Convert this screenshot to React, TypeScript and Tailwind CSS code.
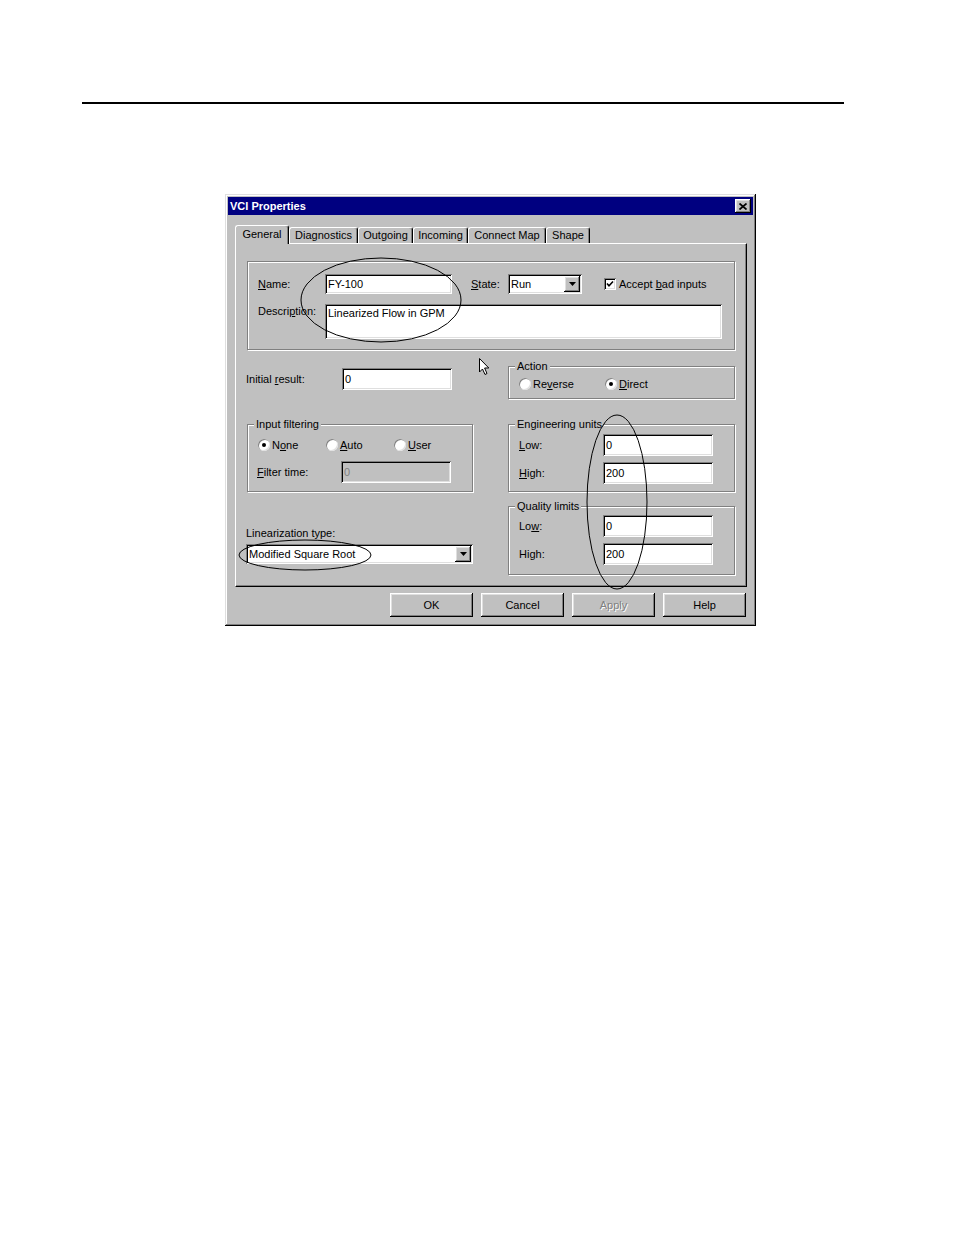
import type { ReactNode } from 'react'

const raised = 'bg-[#c0c0c0] shadow-[inset_-1px_-1px_0_#000,inset_1px_1px_0_#fff,inset_-2px_-2px_0_#808080,inset_2px_2px_0_#dfdfdf]'
const sunken = 'shadow-[inset_1px_1px_0_#808080,inset_-1px_-1px_0_#fff,inset_2px_2px_0_#000,inset_-2px_-2px_0_#dfdfdf]'

function Field({ value, className = '', disabled = false }: { value?: string; className?: string; disabled?: boolean }) {
    return (
        <div className={`flex items-center pl-[3px] ${disabled ? 'bg-[#c0c0c0] text-[#808080]' : 'bg-white text-black'} ${sunken} ${className}`}>
            {value}
        </div>
    )
}

function Arrow() {
    return (
        <div className={`flex items-center justify-center w-[16px] h-[16px] ${raised}`}>
            <svg width="7" height="4" viewBox="0 0 7 4">
                <path d="M0 0 H7 L3.5 4 Z" fill="#000" />
            </svg>
        </div>
    )
}

function Combo({ value, className = '' }: { value: string; className?: string }) {
    return (
        <div className={`flex items-center justify-between bg-white pl-[3px] pr-[2px] ${sunken} ${className}`}>
            <span>{value}</span>
            <Arrow />
        </div>
    )
}

function Radio({ checked = false, children }: { checked?: boolean; children: ReactNode }) {
    return (
        <div className="flex items-center h-[14px]">
            <div className="flex items-center justify-center w-[12px] h-[12px] rounded-full bg-white shadow-[inset_1px_1px_0_#808080,inset_-1px_-1px_0_#dfdfdf]">
                {checked && <div className="w-[4px] h-[4px] rounded-full bg-black" />}
            </div>
            <span className="ml-[2px]">{children}</span>
        </div>
    )
}

function Group({ label, className = '', children }: { label: string; className?: string; children: ReactNode }) {
    return (
        <fieldset className={`border border-[#808080] shadow-[inset_1px_1px_0_#fff,1px_1px_0_#fff] ${className}`}>
            <legend className="ml-[6px] px-[2px] leading-[13px] bg-[#c0c0c0]">{label}</legend>
            {children}
        </fieldset>
    )
}

function Tab({ label, width, selected = false }: { label: string; width: string; selected?: boolean }) {
    return (
        <div
            className={`flex justify-center rounded-t-[3px] border-t border-l border-white border-r border-r-black shadow-[inset_-1px_0_0_#808080] bg-[#c0c0c0] ${width} ${
                selected ? 'h-[19px] -mb-[1px] pt-[2px] relative z-10' : 'h-[16px] pt-[1px]'
            }`}
        >
            {label}
        </div>
    )
}

function Button({ label, disabled = false }: { label: string; disabled?: boolean }) {
    return (
        <div
            className={`flex items-center justify-center w-[83px] h-[24px] ${raised} ${
                disabled ? 'text-[#808080] [text-shadow:1px_1px_0_#fff]' : ''
            }`}
        >
            {label}
        </div>
    )
}

export default function App() {
    return (
        <div className="relative w-[954px] h-[1235px] bg-white overflow-hidden font-['Liberation_Sans',Arial,sans-serif] text-[11px] leading-[13px] text-black">
            {/* Page rule */}
            <div className="ml-[82px] mt-[102px] w-[762px] h-[2px] bg-black" />

            {/* Dialog */}
            <div className="ml-[225px] mt-[90px] w-[531px] h-[432px] p-[3px] bg-[#c0c0c0] shadow-[inset_-1px_-1px_0_#000,inset_1px_1px_0_#dfdfdf,inset_-2px_-2px_0_#808080,inset_2px_2px_0_#fff]">
                {/* Title bar */}
                <div className="flex items-center justify-between h-[18px] bg-[#000080] pl-[2px] pr-[2px]">
                    <span className="text-white font-bold">VCI Properties</span>
                    <div className={`flex items-center justify-center w-[16px] h-[14px] ${raised}`}>
                        <svg width="8" height="7" viewBox="0 0 8 7">
                            <path d="M0.5 0.5 L7.5 6.5 M7.5 0.5 L0.5 6.5" stroke="#000" strokeWidth="1.7" />
                        </svg>
                    </div>
                </div>

                {/* Tabs */}
                <div className="flex items-end h-[18px] mt-[10px] ml-[7px]">
                    <Tab label="General" width="w-[54px]" selected />
                    <Tab label="Diagnostics" width="w-[69px]" />
                    <Tab label="Outgoing" width="w-[55px]" />
                    <Tab label="Incoming" width="w-[55px]" />
                    <Tab label="Connect Map" width="w-[78px]" />
                    <Tab label="Shape" width="w-[44px]" />
                </div>

                {/* Tab panel */}
                <div className="ml-[7px] w-[512px] h-[344px] border border-white border-r-black border-b-black shadow-[inset_-1px_-1px_0_#808080] pl-[10px] pt-[17px]">
                    {/* Identity group */}
                    <div className="ml-[1px] w-[488px] h-[89px] border border-[#808080] shadow-[inset_1px_1px_0_#fff,1px_1px_0_#fff] pl-[10px] pt-[12px]">
                        <div className="flex items-center h-[20px]">
                            <span className="w-[67px]"><u>N</u>ame:</span>
                            <Field value="FY-100" className="w-[127px] h-[20px]" />
                            <span className="ml-[19px] w-[37px]"><u>S</u>tate:</span>
                            <Combo value="Run" className="w-[74px] h-[20px]" />
                            <div className={`ml-[22px] flex items-center justify-center w-[12px] h-[12px] bg-white ${sunken}`}>
                                <svg width="8" height="8" viewBox="0 0 8 8">
                                    <path d="M1 3.5 L3 5.8 L7 1.5" stroke="#000" strokeWidth="1.6" fill="none" />
                                </svg>
                            </div>
                            <span className="ml-[3px]">Accept <u>b</u>ad inputs</span>
                        </div>
                        <div className="flex items-start mt-[10px]">
                            <span className="w-[67px] pt-[1px]">Descri<u>p</u>tion:</span>
                            <div className={`w-[397px] h-[35px] bg-white pl-[3px] pt-[3px] ${sunken}`}>Linearized Flow in GPM</div>
                        </div>
                    </div>

                    <div className="flex">
                        {/* Left column */}
                        <div className="w-[227px] flex flex-col">
                            <div className="flex items-center h-[22px] mt-[18px]">
                                <span className="w-[96px]">Initial <u>r</u>esult:</span>
                                <Field value="0" className="w-[110px] h-[22px]" />
                            </div>

                            <Group label="Input filtering" className="mt-[28px] ml-[1px] w-[226px] h-[74px]">
                                <div className="flex mt-[7px] pl-[10px]">
                                    <div className="w-[68px]"><Radio checked>N<u>o</u>ne</Radio></div>
                                    <div className="w-[68px]"><Radio><u>A</u>uto</Radio></div>
                                    <div><Radio><u>U</u>ser</Radio></div>
                                </div>
                                <div className="flex items-center h-[22px] mt-[9px] pl-[9px]">
                                    <span className="w-[84px]"><u>F</u>ilter time:</span>
                                    <Field value="0" disabled className="w-[110px] h-[22px]" />
                                </div>
                            </Group>

                            <span className="mt-[35px]">Linearization type:</span>
                            <Combo value="Modified Square Root" className="mt-[4px] w-[227px] h-[20px]" />
                        </div>

                        {/* Right column */}
                        <div className="ml-[35px] w-[227px] flex flex-col">
                            <Group label="Action" className="mt-[10px] h-[39px]">
                                <div className="flex mt-[4px] pl-[10px]">
                                    <div className="w-[86px]"><Radio>Re<u>v</u>erse</Radio></div>
                                    <div><Radio checked><u>D</u>irect</Radio></div>
                                </div>
                            </Group>

                            <Group label="Engineering units" className="mt-[19px] h-[74px]">
                                <div className="flex items-center h-[22px] mt-[3px] pl-[10px]">
                                    <span className="w-[84px]"><u>L</u>ow:</span>
                                    <Field value="0" className="w-[110px] h-[22px]" />
                                </div>
                                <div className="flex items-center h-[22px] mt-[6px] pl-[10px]">
                                    <span className="w-[84px]"><u>H</u>igh:</span>
                                    <Field value="200" className="w-[110px] h-[22px]" />
                                </div>
                            </Group>

                            <Group label="Quality limits" className="mt-[8px] h-[75px]">
                                <div className="flex items-center h-[22px] mt-[2px] pl-[10px]">
                                    <span className="w-[84px]">Lo<u>w</u>:</span>
                                    <Field value="0" className="w-[110px] h-[22px]" />
                                </div>
                                <div className="flex items-center h-[22px] mt-[6px] pl-[10px]">
                                    <span className="w-[84px]">Hi<u>g</u>h:</span>
                                    <Field value="200" className="w-[110px] h-[22px]" />
                                </div>
                            </Group>
                        </div>
                    </div>
                </div>

                {/* Buttons */}
                <div className="flex justify-end gap-[8px] mt-[6px] pr-[7px]">
                    <Button label="OK" />
                    <Button label="Cancel" />
                    <Button label="Apply" disabled />
                    <Button label="Help" />
                </div>
            </div>

            {/* Hand-drawn annotations and mouse pointer */}
            <svg className="absolute inset-0 pointer-events-none" width="954" height="1235" viewBox="0 0 954 1235">
                <ellipse cx="381" cy="300" rx="80" ry="42" fill="none" stroke="#000" strokeWidth="1" />
                <ellipse cx="305" cy="555" rx="66" ry="15" fill="none" stroke="#000" strokeWidth="1" />
                <ellipse cx="617" cy="502" rx="30" ry="87" fill="none" stroke="#000" strokeWidth="1" />
                <path
                    d="M479.5 358.5 V372 L482.5 369 L485 374.5 L487 373.5 L484.6 368 L488.8 368 Z"
                    fill="#fff"
                    stroke="#000"
                    strokeWidth="1"
                />
            </svg>
        </div>
    )
}
